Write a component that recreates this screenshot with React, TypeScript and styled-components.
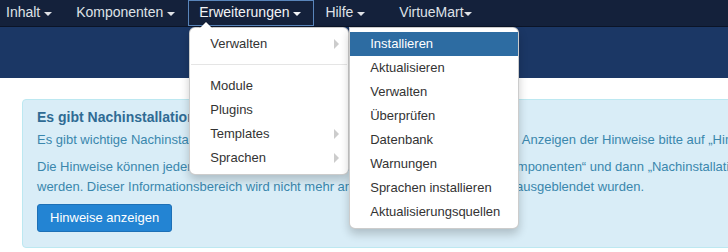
import React from "react";
import styled, { createGlobalStyle, css } from "styled-components";

const Global = createGlobalStyle`
  html, body { margin: 0; padding: 0; background: #fff; overflow: hidden; }
  body { font-family: "Liberation Sans", Arial, sans-serif; }
  * { box-sizing: border-box; }
`;

const Page = styled.div`
  width: 728px;
  height: 252px;
  overflow: hidden;
  position: relative;
`;

const NavBar = styled.div`
  height: 27px;
  background: #14213b;
  border-bottom: 1px solid #0b1427;
  position: relative;
  z-index: 5;
`;

const NavList = styled.ul`
  display: flex;
  margin: 0 0 0 -5px;
  padding: 0;
  list-style: none;
`;

const NavItem = styled.li<{ $active?: boolean; $extra?: number }>`
  position: relative;
  height: 26px;
  padding: 0 12px 2px 10px;
  margin-left: ${(p) => p.$extra ?? 0}px;
  border: 1px solid transparent;
  font-size: 14px;
  line-height: 22px;
  color: #dfe2e7;
  white-space: nowrap;
  ${(p) =>
    p.$active &&
    css`
      border-color: #5985bb;
      color: #f2f4f7;
    `}
`;

const Caret = styled.span`
  display: inline-block;
  width: 0;
  height: 0;
  vertical-align: 1px;
  border-top: 4px solid currentColor;
  border-left: 4px solid transparent;
  border-right: 4px solid transparent;
`;

const Menu = styled.ul<{ $sub?: boolean }>`
  position: absolute;
  margin: 0;
  padding: 4px 0;
  list-style: none;
  background: #fff;
  border: 1px solid rgba(0, 0, 0, 0.2);
  box-shadow: 0 5px 10px rgba(0, 0, 0, 0.2);
  font-size: 13px;
  line-height: 24px;
  color: #333;
  ${(p) =>
    p.$sub
      ? css`
          top: -5px;
          left: calc(100% + 1px);
          width: 170px;
          border-radius: 0 6px 6px 6px;
        `
      : css`
          top: 26px;
          left: 0;
          width: 160px;
          border-radius: 6px;
          &::before {
            content: "";
            position: absolute;
            top: -7px;
            left: 9px;
            border-left: 7px solid transparent;
            border-right: 7px solid transparent;
            border-bottom: 7px solid rgba(0, 0, 0, 0.2);
          }
          &::after {
            content: "";
            position: absolute;
            top: -6px;
            left: 10px;
            border-left: 6px solid transparent;
            border-right: 6px solid transparent;
            border-bottom: 6px solid #fff;
          }
        `}
`;

const MenuItem = styled.li<{ $active?: boolean }>`
  position: relative;
  height: 24px;
  padding: 0 20px;
  white-space: nowrap;
  ${(p) =>
    p.$active &&
    css`
      background: #2d6ca2;
      color: #fff;
    `}
`;

const SubArrow = styled.span`
  position: absolute;
  right: 9px;
  top: 7px;
  width: 0;
  height: 0;
  border-top: 5px solid transparent;
  border-bottom: 5px solid transparent;
  border-left: 5px solid #cccccc;
`;

const Divider = styled.li`
  height: 1px;
  margin: 8px 1px 9px;
  background: #e5e5e5;
`;

const Header = styled.div`
  height: 51px;
  background: #1b3765;
`;

const Alert = styled.div`
  margin: 21px 0 0 22px;
  width: 900px;
  padding: 7px 14px 15px;
  background: #d9edf7;
  border: 1px solid #bce8f1;
  border-radius: 4px;
  color: #3a87ad;
`;

const AlertHeading = styled.h4`
  margin: 0 0 3px;
  font-size: 14px;
  line-height: 20px;
  font-weight: bold;
  color: #2f6b94;
  white-space: nowrap;
`;

const AlertText = styled.p`
  margin: 0 0 7px;
  font-size: 13px;
  line-height: 20px;
  white-space: nowrap;
`;

const Button = styled.button`
  display: block;
  height: 28px;
  padding: 4px 12px;
  margin: 0;
  font-family: inherit;
  font-size: 13px;
  line-height: 18px;
  color: #fff;
  background: #2384d3;
  border: 1px solid #1d70b6;
  border-radius: 3px;
`;

const extensionsMenu = ["Module", "Plugins", "Templates", "Sprachen"];
const withArrow = new Set(["Templates", "Sprachen"]);
const manageMenu = [
  "Installieren",
  "Aktualisieren",
  "Verwalten",
  "Überprüfen",
  "Datenbank",
  "Warnungen",
  "Sprachen installieren",
  "Aktualisierungsquellen",
];

export default function App() {
  return (
    <Page>
      <Global />
      <NavBar>
        <NavList>
          <NavItem>
            Inhalt <Caret />
          </NavItem>
          <NavItem>
            Komponenten <Caret />
          </NavItem>
          <NavItem $active>
            Erweiterungen <Caret />
            <Menu>
              <MenuItem>
                Verwalten
                <SubArrow />
                <Menu $sub>
                  {manageMenu.map((m, i) => (
                    <MenuItem key={m} $active={i === 0}>
                      {m}
                    </MenuItem>
                  ))}
                </Menu>
              </MenuItem>
              <Divider />
              {extensionsMenu.map((m) => (
                <MenuItem key={m}>
                  {m}
                  {withArrow.has(m) && <SubArrow />}
                </MenuItem>
              ))}
            </Menu>
          </NavItem>
          <NavItem>
            Hilfe <Caret />
          </NavItem>
          <NavItem $extra={10}>
            VirtueMart
            <Caret />
          </NavItem>
        </NavList>
      </NavBar>
      <Header />
      <Alert>
        <AlertHeading>Es gibt Nachinstallationshinweise</AlertHeading>
        <AlertText>
          Es gibt wichtige Nachinstallationshinweise, die Ihrer Aufmerksamkeit bedürfen.  Zum Anzeigen der Hinweise bitte auf „Hinweise anzeigen“ klicken.
        </AlertText>
        <AlertText>
          Die Hinweise können jederzeit wieder über das Kontrollzentrum oder das Menü „Komponenten“ und dann „Nachinstallationshinweise“ angezeigt
          <br />
          werden. Dieser Informationsbereich wird nicht mehr angezeigt, wenn alle Hinweise ausgeblendet wurden.
        </AlertText>
        <Button>Hinweise anzeigen</Button>
      </Alert>
    </Page>
  );
}
